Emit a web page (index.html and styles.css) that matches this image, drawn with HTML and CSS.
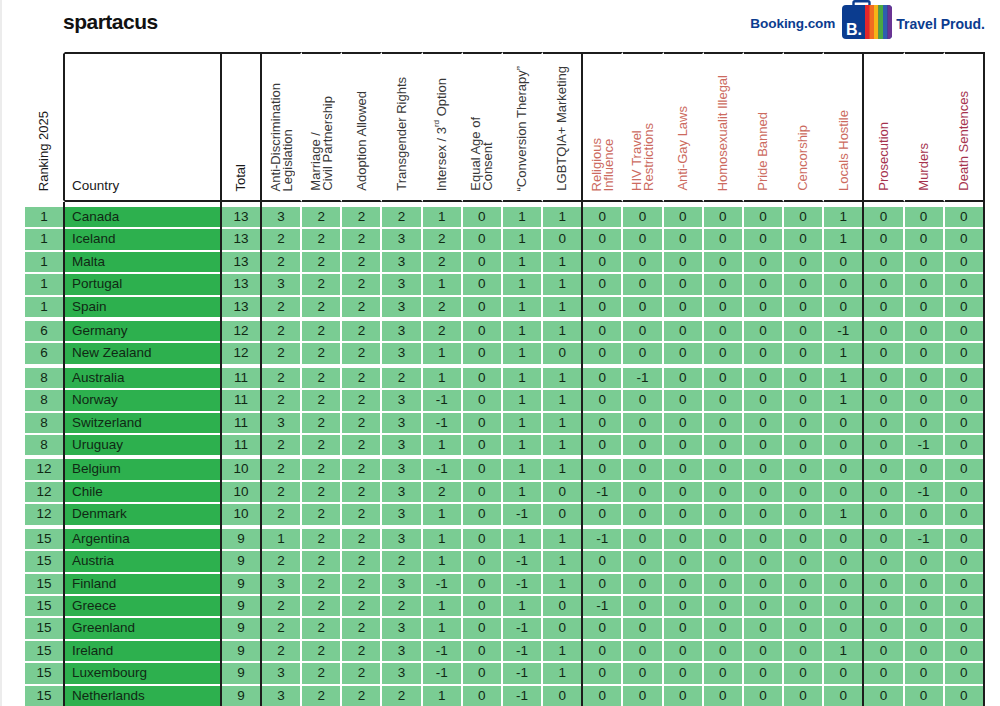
FILE: index.html
```html
<!DOCTYPE html>
<html lang="en">
<head>
<meta charset="utf-8">
<title>Spartacus Gay Travel Index 2025</title>
<link rel="stylesheet" href="styles.css">
</head>
<body>
<div class="page">
  <header class="top">
    <div class="spartacus">spartacus</div>
    <div class="booking">
      <span class="bk">Booking.com</span>
      <svg class="case" width="52" height="40" viewBox="0 0 52 40" aria-hidden="true">
        <defs>
          <clipPath id="body"><rect x="2" y="5" width="50" height="34" rx="4"/></clipPath>
        </defs>
        <rect x="13.5" y="1.2" width="16" height="8" rx="1.5" fill="#fff" stroke="#0b3c8f" stroke-width="2.4"/>
        <rect x="2" y="5" width="50" height="34" rx="4" fill="#0b3c8f"/>
        <g clip-path="url(#body)">
          <rect x="25" y="5" width="5" height="34" fill="#e3262b"/>
          <rect x="29.5" y="5" width="4.5" height="34" fill="#f26b21"/>
          <rect x="34" y="5" width="4.5" height="34" fill="#f6b417"/>
          <rect x="38.5" y="5" width="4.5" height="34" fill="#4aa842"/>
          <rect x="43" y="5" width="4.5" height="34" fill="#2e5fae"/>
          <rect x="47.5" y="5" width="4.5" height="34" fill="#6a3393"/>
        </g>
        <text x="6" y="34.5" font-family="Liberation Sans, Arial, sans-serif" font-weight="700" font-size="16" fill="#fff">B.</text>
      </svg>
      <span class="tp">Travel Proud.</span>
    </div>
  </header>

  <table class="ranking">
    <colgroup>
      <col class="c-rank"><col class="c-country"><col class="c-total">
      <col class="c-n"><col class="c-n"><col class="c-n"><col class="c-n"><col class="c-n"><col class="c-n"><col class="c-n"><col class="c-n">
      <col class="c-n"><col class="c-n"><col class="c-n"><col class="c-n"><col class="c-n"><col class="c-n"><col class="c-n">
      <col class="c-n"><col class="c-n"><col class="c-n">
    </colgroup>
    <thead>
      <tr>
        <th class="h-rank"><div class="hw"><span class="v">Ranking 2025</span></div></th>
        <th class="h-country"><div class="hw hw-left">Country</div></th>
        <th class="h-dark"><div class="hw"><span class="v">Total</span></div></th>
        <th class="g1"><div class="hw"><span class="v">Anti-Discrimination<br>Legislation</span></div></th>
        <th class="g1"><div class="hw"><span class="v">Marriage /<br>Civil Partnership</span></div></th>
        <th class="g1"><div class="hw"><span class="v">Adoption Allowed</span></div></th>
        <th class="g1"><div class="hw"><span class="v">Transgender Rights</span></div></th>
        <th class="g1"><div class="hw"><span class="v">Intersex / 3<span class="sup">rd</span> Option</span></div></th>
        <th class="g1"><div class="hw"><span class="v">Equal Age of<br>Consent</span></div></th>
        <th class="g1"><div class="hw"><span class="v">“Conversion Therapy”</span></div></th>
        <th class="g1"><div class="hw"><span class="v">LGBTQIA+ Marketing</span></div></th>
        <th class="g2"><div class="hw"><span class="v">Religious<br>Influence</span></div></th>
        <th class="g2"><div class="hw"><span class="v">HIV Travel<br>Restrictions</span></div></th>
        <th class="g2"><div class="hw"><span class="v">Anti-Gay Laws</span></div></th>
        <th class="g2"><div class="hw"><span class="v">Homosexualit Illegal</span></div></th>
        <th class="g2"><div class="hw"><span class="v">Pride Banned</span></div></th>
        <th class="g2"><div class="hw"><span class="v">Cencorship</span></div></th>
        <th class="g2"><div class="hw"><span class="v">Locals Hostile</span></div></th>
        <th class="g3"><div class="hw"><span class="v">Prosecution</span></div></th>
        <th class="g3"><div class="hw"><span class="v">Murders</span></div></th>
        <th class="g3"><div class="hw"><span class="v">Death Sentences</span></div></th>
      </tr>
    </thead>
    <tbody>
      <tr class="first"><td>1</td><td>Canada</td><td>13</td><td>3</td><td>2</td><td>2</td><td>2</td><td>1</td><td>0</td><td>1</td><td>1</td><td>0</td><td>0</td><td>0</td><td>0</td><td>0</td><td>0</td><td>1</td><td>0</td><td>0</td><td>0</td></tr>
      <tr><td>1</td><td>Iceland</td><td>13</td><td>2</td><td>2</td><td>2</td><td>3</td><td>2</td><td>0</td><td>1</td><td>0</td><td>0</td><td>0</td><td>0</td><td>0</td><td>0</td><td>0</td><td>1</td><td>0</td><td>0</td><td>0</td></tr>
      <tr><td>1</td><td>Malta</td><td>13</td><td>2</td><td>2</td><td>2</td><td>3</td><td>2</td><td>0</td><td>1</td><td>1</td><td>0</td><td>0</td><td>0</td><td>0</td><td>0</td><td>0</td><td>0</td><td>0</td><td>0</td><td>0</td></tr>
      <tr><td>1</td><td>Portugal</td><td>13</td><td>3</td><td>2</td><td>2</td><td>3</td><td>1</td><td>0</td><td>1</td><td>1</td><td>0</td><td>0</td><td>0</td><td>0</td><td>0</td><td>0</td><td>0</td><td>0</td><td>0</td><td>0</td></tr>
      <tr class="gend"><td>1</td><td>Spain</td><td>13</td><td>2</td><td>2</td><td>2</td><td>3</td><td>2</td><td>0</td><td>1</td><td>1</td><td>0</td><td>0</td><td>0</td><td>0</td><td>0</td><td>0</td><td>0</td><td>0</td><td>0</td><td>0</td></tr>
      <tr><td>6</td><td>Germany</td><td>12</td><td>2</td><td>2</td><td>2</td><td>3</td><td>2</td><td>0</td><td>1</td><td>1</td><td>0</td><td>0</td><td>0</td><td>0</td><td>0</td><td>0</td><td>-1</td><td>0</td><td>0</td><td>0</td></tr>
      <tr class="gend"><td>6</td><td>New Zealand</td><td>12</td><td>2</td><td>2</td><td>2</td><td>3</td><td>1</td><td>0</td><td>1</td><td>0</td><td>0</td><td>0</td><td>0</td><td>0</td><td>0</td><td>0</td><td>1</td><td>0</td><td>0</td><td>0</td></tr>
      <tr><td>8</td><td>Australia</td><td>11</td><td>2</td><td>2</td><td>2</td><td>2</td><td>1</td><td>0</td><td>1</td><td>1</td><td>0</td><td>-1</td><td>0</td><td>0</td><td>0</td><td>0</td><td>1</td><td>0</td><td>0</td><td>0</td></tr>
      <tr><td>8</td><td>Norway</td><td>11</td><td>2</td><td>2</td><td>2</td><td>3</td><td>-1</td><td>0</td><td>1</td><td>1</td><td>0</td><td>0</td><td>0</td><td>0</td><td>0</td><td>0</td><td>1</td><td>0</td><td>0</td><td>0</td></tr>
      <tr><td>8</td><td>Switzerland</td><td>11</td><td>3</td><td>2</td><td>2</td><td>3</td><td>-1</td><td>0</td><td>1</td><td>1</td><td>0</td><td>0</td><td>0</td><td>0</td><td>0</td><td>0</td><td>0</td><td>0</td><td>0</td><td>0</td></tr>
      <tr class="gend"><td>8</td><td>Uruguay</td><td>11</td><td>2</td><td>2</td><td>2</td><td>3</td><td>1</td><td>0</td><td>1</td><td>1</td><td>0</td><td>0</td><td>0</td><td>0</td><td>0</td><td>0</td><td>0</td><td>0</td><td>-1</td><td>0</td></tr>
      <tr><td>12</td><td>Belgium</td><td>10</td><td>2</td><td>2</td><td>2</td><td>3</td><td>-1</td><td>0</td><td>1</td><td>1</td><td>0</td><td>0</td><td>0</td><td>0</td><td>0</td><td>0</td><td>0</td><td>0</td><td>0</td><td>0</td></tr>
      <tr><td>12</td><td>Chile</td><td>10</td><td>2</td><td>2</td><td>2</td><td>3</td><td>2</td><td>0</td><td>1</td><td>0</td><td>-1</td><td>0</td><td>0</td><td>0</td><td>0</td><td>0</td><td>0</td><td>0</td><td>-1</td><td>0</td></tr>
      <tr class="gend"><td>12</td><td>Denmark</td><td>10</td><td>2</td><td>2</td><td>2</td><td>3</td><td>1</td><td>0</td><td>-1</td><td>0</td><td>0</td><td>0</td><td>0</td><td>0</td><td>0</td><td>0</td><td>1</td><td>0</td><td>0</td><td>0</td></tr>
      <tr><td>15</td><td>Argentina</td><td>9</td><td>1</td><td>2</td><td>2</td><td>3</td><td>1</td><td>0</td><td>1</td><td>1</td><td>-1</td><td>0</td><td>0</td><td>0</td><td>0</td><td>0</td><td>0</td><td>0</td><td>-1</td><td>0</td></tr>
      <tr><td>15</td><td>Austria</td><td>9</td><td>2</td><td>2</td><td>2</td><td>2</td><td>1</td><td>0</td><td>-1</td><td>1</td><td>0</td><td>0</td><td>0</td><td>0</td><td>0</td><td>0</td><td>0</td><td>0</td><td>0</td><td>0</td></tr>
      <tr><td>15</td><td>Finland</td><td>9</td><td>3</td><td>2</td><td>2</td><td>3</td><td>-1</td><td>0</td><td>-1</td><td>1</td><td>0</td><td>0</td><td>0</td><td>0</td><td>0</td><td>0</td><td>0</td><td>0</td><td>0</td><td>0</td></tr>
      <tr><td>15</td><td>Greece</td><td>9</td><td>2</td><td>2</td><td>2</td><td>2</td><td>1</td><td>0</td><td>1</td><td>0</td><td>-1</td><td>0</td><td>0</td><td>0</td><td>0</td><td>0</td><td>0</td><td>0</td><td>0</td><td>0</td></tr>
      <tr><td>15</td><td>Greenland</td><td>9</td><td>2</td><td>2</td><td>2</td><td>3</td><td>1</td><td>0</td><td>-1</td><td>0</td><td>0</td><td>0</td><td>0</td><td>0</td><td>0</td><td>0</td><td>0</td><td>0</td><td>0</td><td>0</td></tr>
      <tr><td>15</td><td>Ireland</td><td>9</td><td>2</td><td>2</td><td>2</td><td>3</td><td>-1</td><td>0</td><td>-1</td><td>1</td><td>0</td><td>0</td><td>0</td><td>0</td><td>0</td><td>0</td><td>1</td><td>0</td><td>0</td><td>0</td></tr>
      <tr><td>15</td><td>Luxembourg</td><td>9</td><td>3</td><td>2</td><td>2</td><td>3</td><td>-1</td><td>0</td><td>-1</td><td>1</td><td>0</td><td>0</td><td>0</td><td>0</td><td>0</td><td>0</td><td>0</td><td>0</td><td>0</td><td>0</td></tr>
      <tr><td>15</td><td>Netherlands</td><td>9</td><td>3</td><td>2</td><td>2</td><td>2</td><td>1</td><td>0</td><td>-1</td><td>0</td><td>0</td><td>0</td><td>0</td><td>0</td><td>0</td><td>0</td><td>0</td><td>0</td><td>0</td><td>0</td></tr>
    </tbody>
  </table>
</div>
</body>
</html>
```

FILE: styles.css
```css
html, body {
  margin: 0;
  padding: 0;
  background: #ffffff;
}

.page {
  width: 1000px;
  height: 706px;
  overflow: hidden;
  font-family: "Liberation Sans", Arial, sans-serif;
  border-left: 2px solid #ececec;
  box-sizing: border-box;
}

/* ---------- top bar ---------- */
.top {
  height: 52px;
  display: flex;
  justify-content: space-between;
  align-items: flex-start;
  padding: 0 15px 0 61px;
  box-sizing: border-box;
}

.spartacus {
  margin-top: 11px;
  font-size: 21px;
  line-height: 21px;
  font-weight: 700;
  letter-spacing: -0.5px;
  color: #111111;
}

.booking {
  display: flex;
  align-items: flex-start;
}

.bk,
.tp {
  margin-top: 17px;
  font-size: 14px;
  line-height: 14px;
  font-weight: 700;
  color: #0b3c8f;
}

.bk {
  font-size: 13.6px;
  letter-spacing: -0.1px;
}

.case {
  display: block;
  margin: 0 4px 0 5px;
}

/* ---------- table ---------- */
.ranking {
  margin-left: 23px;
  width: 960px;
  table-layout: fixed;
  border-collapse: separate;
  border-spacing: 0;
  color: #102914;
}

.c-rank { width: 40px; }
.c-country { width: 157px; }
.c-total { width: 40px; }
.c-n { width: 40.17px; }

.ranking th {
  padding: 0;
  vertical-align: bottom;
  font-weight: 400;
  font-size: 13px;
  border-top: 2px solid #1c1c1c;
  border-bottom: 2px solid #1c1c1c;
  border-right: 2px solid transparent;
}

.ranking th.h-rank {
  border-top-color: transparent;
  border-bottom-color: transparent;
}

.hw {
  height: 146px;
  box-sizing: border-box;
  padding-bottom: 9px;
  display: flex;
  justify-content: center;
  align-items: flex-end;
}

.hw-left {
  justify-content: flex-start;
  padding: 0 0 7px 7px;
  font-size: 13.5px;
  line-height: 15px;
  color: #1a1a1a;
}

.v {
  writing-mode: vertical-rl;
  transform: rotate(180deg);
  text-align: start;
  line-height: 11.5px;
  white-space: nowrap;
}

.sup {
  font-size: 8px;
  vertical-align: super;
  line-height: 0;
}

.h-rank, .h-dark { color: #1a1a1a; }
.g1 { color: #383838; }
.g2 { color: #cc6a5e; }
.g3 { color: #a5324d; }

/* black divider lines */
.ranking tr > :nth-child(1),
.ranking tr > :nth-child(2),
.ranking tr > :nth-child(3),
.ranking tr > :nth-child(11),
.ranking tr > :nth-child(18),
.ranking tr > :nth-child(21) {
  border-right-color: #1c1c1c;
}

.ranking td {
  padding: 0 0 2px 0;
  border-right: 2px solid #ffffff;
  background-color: #7acc93;
  background-clip: content-box;
  font-size: 13.5px;
  line-height: 20.4px;
  text-align: center;
  white-space: nowrap;
}

.ranking td:nth-child(2) {
  background-color: #2db04e;
  text-align: left;
  text-indent: 7px;
}

.ranking tr.first td {
  padding-top: 5px;
}

.ranking tr.gend td {
  padding-bottom: 4px;
}
```
